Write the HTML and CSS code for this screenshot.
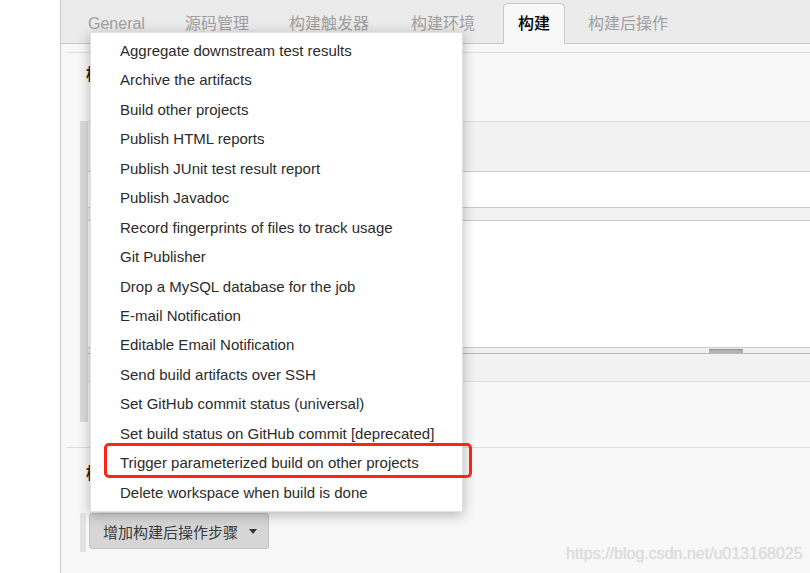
FILE: index.html
```html
<!DOCTYPE html>
<html>
<head>
<meta charset="utf-8">
<link rel="stylesheet" href="styles.css">
</head>
<body>
<div class="page">
  <div class="gutter"></div>
  <div class="main">
    <div class="tabbar">
      <div class="tab">General</div>
      <div class="tab">源码管理</div>
      <div class="tab">构建触发器</div>
      <div class="tab env">构建环境</div>
      <div class="tab active">构建</div>
      <div class="tab">构建后操作</div>
    </div>
    <div class="content">
      <div class="section build">
        <div class="section-head"><h3>构建</h3></div>
        <div class="chunk">
          <div class="row r1"></div>
          <div class="row r2"></div>
          <div class="row r3"></div>
          <div class="row r4"></div>
          <div class="row r5"><div class="grip"></div></div>
          <div class="row r6"></div>
          <div class="row r7"></div>
        </div>
      </div>
      <div class="section post">
        <div class="section-head"><h3>构建后操作</h3></div>
        <div class="chunk small">
          <button class="add-btn">增加构建后操作步骤<span class="caret"></span></button>
        </div>
      </div>
    </div>
  </div>
</div>
<ul class="menu">
  <li>Aggregate downstream test results</li>
  <li>Archive the artifacts</li>
  <li>Build other projects</li>
  <li>Publish HTML reports</li>
  <li>Publish JUnit test result report</li>
  <li>Publish Javadoc</li>
  <li>Record fingerprints of files to track usage</li>
  <li>Git Publisher</li>
  <li>Drop a MySQL database for the job</li>
  <li>E-mail Notification</li>
  <li>Editable Email Notification</li>
  <li>Send build artifacts over SSH</li>
  <li>Set GitHub commit status (universal)</li>
  <li>Set build status on GitHub commit [deprecated]</li>
  <li class="hl">Trigger parameterized build on other projects</li>
  <li>Delete workspace when build is done</li>
</ul>
<div class="watermark">https://blog.csdn.net/u013168025</div>
</body>
</html>
```

FILE: styles.css
```css
html, body {
  margin: 0;
  padding: 0;
}
body {
  width: 810px;
  height: 573px;
  overflow: hidden;
  position: relative;
  background: #fff;
  font-family: "Liberation Sans", Arial, "Noto Sans CJK SC", sans-serif;
  color: #333;
}
.page {
  display: flex;
  height: 573px;
}
.gutter {
  width: 60px;
  flex: none;
  background: #fff;
}
.main {
  flex: 1;
  border-left: 1px solid #c8c8c8;
  background: #f8f8f8;
  display: flex;
  flex-direction: column;
  min-width: 0;
}
.tabbar {
  height: 43px;
  flex: none;
  background: #ebebeb;
  border-bottom: 1px solid #c8c8c8;
  display: flex;
  align-items: flex-end;
  padding-left: 7px;
}
.tab {
  box-sizing: border-box;
  height: 41px;
  line-height: 39px;
  padding: 0 14px;
  margin: 0 5px -1px;
  border: 1px solid transparent;
  border-bottom: none;
  font-size: 16px;
  color: #a0a0a0;
  white-space: nowrap;
}
.tab:first-child {
  margin-left: 5px;
}
.tab.env {
  margin-left: 7px;
}
.tab.active {
  margin-left: 8px;
  margin-right: 3px;
  background: #f8f8f8;
  border-color: #c8c8c8;
  border-radius: 5px 5px 0 0;
  color: #000;
  font-weight: 500;
  position: relative;
  z-index: 1;
}
.content {
  padding-top: 8px;
}
.section {
  margin-left: 6px;
  border-top: 1px solid #dcdcdc;
}
.section-head h3 {
  margin: 0;
  padding-left: 19px;
  font-size: 16px;
  font-weight: bold;
  line-height: 20px;
  color: #222;
}
.build .section-head {
  height: 68px;
  padding-top: 12px;
  box-sizing: border-box;
}
.post .section-head {
  height: 65px;
  padding-top: 16px;
  box-sizing: border-box;
}
.chunk {
  margin-left: 13px;
  border-left: 8px solid #dcdcdc;
  height: 301px;
  margin-bottom: 25px;
  display: flex;
  flex-direction: column;
}
.row {
  flex: none;
}
.r1 { border-top: 1px solid #dcdcdc; background: #f2f2f2; height: 49px; }
.r2 { border-top: 1px solid #cacaca; background: #fff; height: 35px; }
.r3 { border-top: 1px solid #cacaca; background: #f2f2f2; height: 12px; }
.r4 { border-top: 1px solid #cacaca; background: #fff; height: 126px; }
.r5 { border-top: 1px solid #cacaca; background: #f0f0f0; height: 5px; }
.r6 { border-top: 1px solid #b9b9b9; background: #f2f2f2; height: 27px; }
.r7 { border-top: 1px solid #dcdcdc; background: #f8f8f8; flex: 1; }
.grip {
  margin: 1px 0 0 621px;
  width: 34px;
  height: 3px;
  border-top: 1px solid #8e8e8e;
  background: #b3b3ae;
}
.chunk.small {
  border-left: 6px solid #e3e3e3;
  height: 39px;
  margin-bottom: 0;
}
.add-btn {
  margin-left: 3px;
  box-sizing: border-box;
  width: 180px;
  height: 36px;
  padding: 0 0 0 13px;
  display: flex;
  align-items: center;
  background: #d6d6d6;
  border: 1px solid #c2c2c2;
  border-radius: 3px;
  font-family: "Liberation Sans", Arial, "Noto Sans CJK SC", sans-serif;
  font-size: 15px;
  color: #3a3a3a;
}
.caret {
  display: inline-block;
  margin-left: 11px;
  width: 0;
  height: 0;
  border-left: 4px solid transparent;
  border-right: 4px solid transparent;
  border-top: 5px solid #333;
}
.menu {
  position: absolute;
  left: 90px;
  top: 32px;
  width: 373px;
  height: 480px;
  box-sizing: border-box;
  margin: 0;
  padding: 3px 0;
  list-style: none;
  background: #fff;
  border: 1px solid rgba(0, 0, 0, 0.12);
  box-shadow: 0 3px 12px rgba(0, 0, 0, 0.28);
  z-index: 5;
}
.menu li {
  height: 29.45px;
  line-height: 29.45px;
  padding-left: 29px;
  font-size: 15px;
  color: #2b2b2b;
  white-space: nowrap;
}
.menu li.hl {
  position: relative;
}
.menu li.hl::after {
  content: "";
  position: absolute;
  left: 13px;
  right: -10px;
  top: -5px;
  bottom: 0;
  border: 3px solid #f7261c;
  border-radius: 5px;
}
.watermark {
  position: absolute;
  left: 566px;
  top: 544px;
  font-size: 16px;
  line-height: 20px;
  color: #dedede;
  text-shadow: 0 0 1px rgba(160, 160, 160, 0.35);
  white-space: nowrap;
}
```
